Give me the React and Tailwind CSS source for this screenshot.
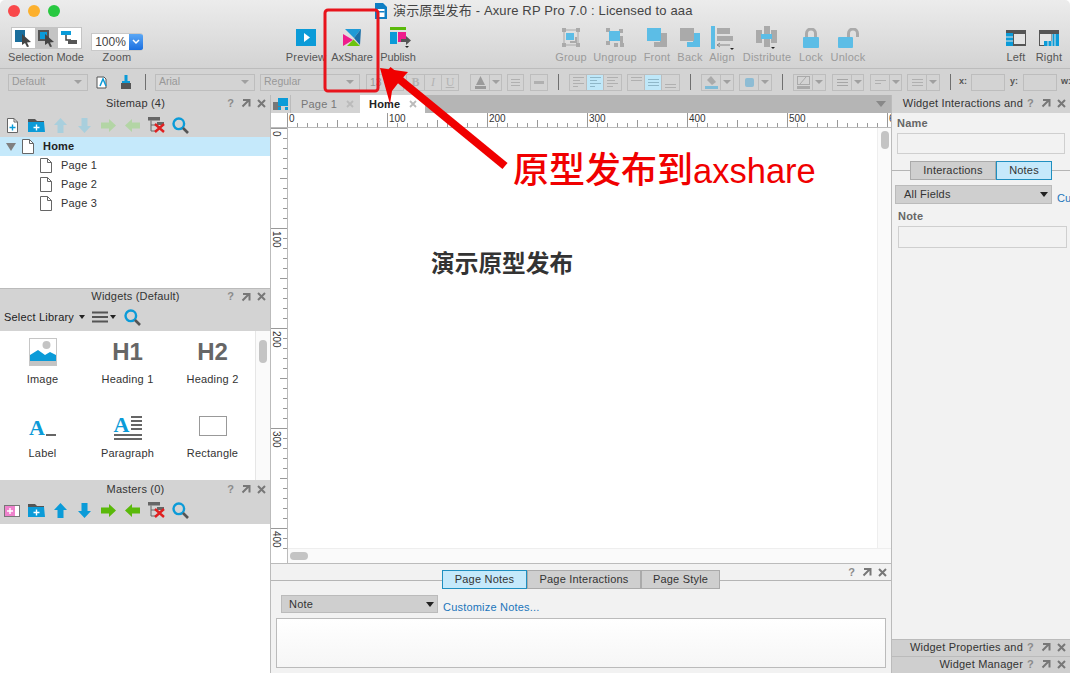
import { useMemo } from 'react';

const BLUE = '#0b9bd8';
const SKY = '#5cbde6';
const GREEN = '#5ab90a';

const Svg = ({ w, h, children, className = '' }) => (
  <svg width={w} height={h} viewBox={`0 0 ${w} ${h}`} className={className}>
    {children}
  </svg>
);

// ---- small panel icons
const NewPage = () => (
  <Svg w={13} h={15}>
    <path d="M1.5.5h6.5l3.5 3.5v10.5h-10z" fill="#fff" stroke="#666" />
    <path d="M8 .5v3.5h3.5" fill="none" stroke="#666" />
    <path d="M6.5 6.5v6M3.5 9.5h6" stroke={BLUE} strokeWidth="1.4" />
  </Svg>
);
const NewFolder = () => (
  <Svg w={17} h={13}>
    <path d="M0 0h7l2 2h7v2H0z" fill="#555" />
    <path d="M0 3h16l1 10H0z" fill={BLUE} />
    <path d="M8.5 5.5v6M5.5 8.5h6" stroke="#fff" strokeWidth="1.4" />
  </Svg>
);
const NewMaster = () => (
  <Svg w={16} h={13}>
    <rect x=".5" y="1.5" width="15" height="11" fill="#fff" stroke="#777" />
    <rect x="1" y="2" width="10" height="10" fill="#ee82cc" />
    <path d="M6 4v6M3 7h6" stroke="#fff" strokeWidth="1.4" />
  </Svg>
);
const Arrow = ({ dir, color }) => {
  const paths = {
    up: 'M6.5 0L13 7H9.5v8h-6V7H0z',
    down: 'M3.5 0h6v8H13l-6.5 7L0 8h3.5z',
    right: 'M0 3.5h8V0l7 6.5L8 13V9.5H0z',
    left: 'M15 3.5H7V0L0 6.5 7 13V9.5h8z',
  };
  const v = dir === 'up' || dir === 'down';
  return (
    <svg width={v ? 13 : 15} height={v ? 15 : 13} viewBox={v ? '0 0 13 15' : '0 0 15 13'}>
      <path d={paths[dir]} fill={color} />
    </svg>
  );
};
const DeleteTree = () => (
  <Svg w={17} h={16}>
    <rect x="0" y="0" width="12" height="3.5" fill="#666" />
    <path d="M3 3.5V14h5M3 8h5" fill="none" stroke="#666" />
    <rect x="9" y="5" width="7" height="3" fill="#666" />
    <path d="M7 7l9 8M16 7l-9 8" stroke="#e02020" strokeWidth="2.4" />
  </Svg>
);
const Search = () => (
  <Svg w={17} h={17}>
    <circle cx="6.8" cy="6.8" r="5.3" fill="none" stroke={BLUE} strokeWidth="2.4" />
    <path d="M11 11l5 5" stroke="#555" strokeWidth="2.6" />
  </Svg>
);
const Page = () => (
  <Svg w={12} h={15}>
    <path d="M.5.5h7l4 4v10H.5z" fill="#fff" stroke="#666" />
    <path d="M7.5.5v4h4" fill="none" stroke="#666" />
  </Svg>
);

// ---- main toolbar icons
const PreviewIcon = () => (
  <Svg w={20} h={17}>
    <rect width="20" height="17" fill={BLUE} />
    <path d="M8 4l6 4.5-6 4.5z" fill="#fff" />
  </Svg>
);
const AxShareIcon = () => (
  <Svg w={18} h={18}>
    <path d="M2 0h16l-7 9z" fill="#1f9ad6" />
    <path d="M18 0l-7 9 6 7z" fill="#1a6fa8" />
    <path d="M0 5l10 6-10 6z" fill="#ef1c8c" />
    <path d="M10.5 10.5l6.500 6.500H4z" fill="#6cc40e" />
  </Svg>
);
const PublishIcon = () => (
  <Svg w={22} h={21}>
    <rect x="0" y="0" width="16" height="3" fill="#5ab90a" />
    <rect x="0" y="5" width="7" height="12" fill={BLUE} />
    <rect x="8" y="5" width="8" height="10" fill="#ef1c8c" />
    <path d="M11 12h5V9l5 4.500-5 4.500v-3h-5z" fill="#555" />
    <path d="M15 19h4l-2 2z" fill="#222" />
  </Svg>
);
const GroupIcon = () => (
  <Svg w={18} h={19}>
    <rect x="2" y="2" width="14" height="15" fill="none" stroke="#aaa" />
    <path d="M0 0h4v4H0zM14 0h4v4h-4zM0 15h4v4H0zM14 15h4v4h-4z" fill="#aaa" />
    <rect x="4" y="5" width="8" height="7" fill={SKY} />
    <path d="M13 9h2v6H8v-2h5z" fill="#aaa" />
  </Svg>
);
const UngroupIcon = () => (
  <Svg w={18} h={19}>
    <path d="M0 0h4v4H0zM13 1h4v4h-4zM0 13h4v4H0zM14 15h4v4h-4zM8 15h4v4H8z" fill="#aaa" />
    <rect x="3" y="3" width="11" height="10" fill={SKY} />
    <path d="M14 8h3v7h-3z" fill="#aaa" />
  </Svg>
);
const FrontIcon = () => (
  <Svg w={20} h={19}>
    <path d="M13 5h7v14H7v-5h6z" fill="#aaa" />
    <rect width="14" height="13" fill={SKY} />
  </Svg>
);
const BackIcon = () => (
  <Svg w={20} h={19}>
    <path d="M13 5h7v14H7v-5h6z" fill={SKY} />
    <rect width="14" height="13" fill="#aaa" />
  </Svg>
);
const AlignIcon = () => (
  <Svg w={23} h={24}>
    <rect width="4" height="23" fill={SKY} />
    <rect x="6" y="2" width="13" height="6" fill="#aaa" />
    <rect x="6" y="10" width="16" height="5" fill="#aaa" />
    <path d="M6 19h13M6 19l3-2M6 19l3 2" stroke="#888" fill="none" />
    <path d="M19 22h4l-2 2z" fill="#222" />
  </Svg>
);
const DistributeIcon = () => (
  <Svg w={22} h={24}>
    <rect x="0" y="4" width="6" height="13" fill="#aaa" />
    <rect x="8" y="0" width="6" height="21" fill="#aaa" />
    <rect x="15" y="4" width="6" height="13" fill="#aaa" />
    <rect x="5" y="8" width="11" height="5" fill={SKY} />
    <path d="M15 21h4l-2 2z" fill="#222" />
  </Svg>
);
const LockIcon = () => (
  <Svg w={16} h={20}>
    <path d="M3.500 9V5.500a4.500 4.500 0 0 1 9 0V9" fill="none" stroke="#aaa" strokeWidth="3" />
    <rect y="9" width="16" height="11" rx="1" fill={SKY} />
  </Svg>
);
const UnlockIcon = () => (
  <Svg w={21} h={20}>
    <path d="M10.500 9V5.500a4.500 4.500 0 0 1 9 0V9" fill="none" stroke="#aaa" strokeWidth="3" />
    <rect y="9" width="15" height="11" rx="1" fill={SKY} />
  </Svg>
);
const LeftIcon = () => (
  <Svg w={20} h={16}>
    <rect width="20" height="16" fill="#555" />
    <rect y="3" width="7" height="13" fill={BLUE} />
    <rect x="8" y="4" width="11" height="10" fill="#e4e4e4" />
    <path d="M0 7h7M0 11h7" stroke="#e4e4e4" />
  </Svg>
);
const RightIcon = () => (
  <Svg w={20} h={16}>
    <rect width="20" height="16" fill="#555" />
    <rect x="13" y="4" width="7" height="12" fill={BLUE} />
    <rect x="1" y="4" width="11" height="11" fill="#e4e4e4" />
    <rect x="5" y="11" width="15" height="5" fill={BLUE} />
    <path d="M13 4v12M9 11v5M16 4v12" stroke="#e4e4e4" />
  </Svg>
);

const Tool = ({ label, w, muted, tight, children }) => (
  <div className={`flex flex-col items-center shrink-0 ${w}`}>
    <div className="h-[27px] flex items-center justify-center">{children}</div>
    <span className={`text-[11px] leading-[13px] whitespace-nowrap ${tight ? 'tracking-[-0.1px]' : 'tracking-[0.2px]'} ${muted ? 'text-[#9b9b9b]' : 'text-[#555]'}`}>
      {label}
    </span>
  </div>
);

// ---- format bar bits
const FmtSelect = ({ label, w, ml }) => (
  <div className={`h-[17px] border border-[#bdbdbd] flex items-center justify-between pl-[3px] pr-[5px] shrink-0 ${w} ${ml}`}>
    <span className="text-[10.5px] text-[#989898]">{label}</span>
    <span className="w-0 h-0 border-x-[4px] border-x-transparent border-t-[4px] border-t-[#a0a0a0]" />
  </div>
);
const Sep = ({ ml }) => <div className={`w-px h-[16px] bg-[#6f6f6f] shrink-0 ${ml}`} />;
const FmtSplit = ({ ml, w = 'w-[33px]', children }) => (
  <div className={`flex h-[17px] border border-[#bdbdbd] shrink-0 ${w} ${ml}`}>
    <div className="w-[19px] border-r border-[#bdbdbd] flex items-center justify-center">{children}</div>
    <div className="flex-1 flex items-center justify-center">
      <span className="w-0 h-0 border-x-[4px] border-x-transparent border-t-[4px] border-t-[#a0a0a0]" />
    </div>
  </div>
);
const Lines = ({ rows, w = 11, color = '#b0b0b0' }) => (
  <div className="flex flex-col gap-[2px]">
    {rows.map((r, i) => (
      <div key={i} className="h-px" style={{ width: r * w, backgroundColor: color }} />
    ))}
  </div>
);
const FmtCell = ({ on, children }) => (
  <div className={`h-[15px] w-[17px] border-r last:border-r-0 border-[#bdbdbd] flex items-center justify-center ${on ? 'bg-[#bfe7f8]' : ''}`}>
    {children}
  </div>
);

// ---- panels
const PanelIcons = ({ className = '' }) => (
  <div className={`flex items-center text-[#8b8b8b] shrink-0 ${className}`}>
    <span className="w-[15px] text-center text-[11px] font-bold">?</span>
    <svg width="10" height="10" viewBox="0 0 10 10" className="ml-[3px]">
      <path d="M2 2h6.500v6.500M8 2L1.500 8.500" fill="none" stroke="#777" strokeWidth="2" />
    </svg>
    <svg width="9" height="9" viewBox="0 0 9 9" className="ml-[6px]">
      <path d="M1 1l7 7M8 1L1 8" stroke="#777" strokeWidth="2" />
    </svg>
  </div>
);
const PanelHead = ({ title, h = 'h-[18px]' }) => (
  <div className={`flex items-center pr-[4px] ${h}`}>
    <div className="flex-1 text-center pl-[48px] text-[11px] text-[#333] tracking-[0.2px]">{title}</div>
    <PanelIcons />
  </div>
);
const SideHead = ({ title }) => (
  <div className="h-[17px] pb-[2px] bg-[#cfcfcf] border-t border-[#bbb] flex items-center justify-end pr-[4px] text-[11px] text-[#333] tracking-[0.2px]">
    <span className="whitespace-nowrap">{title}</span>
    <PanelIcons />
  </div>
);
const ToolCell = ({ children }) => <div className="w-[24px] flex justify-center items-center shrink-0">{children}</div>;
const PanelTools = ({ faded, first, className = '' }) => (
  <div className={`flex items-center h-[24px] ${className}`}>
    <ToolCell>{first}</ToolCell>
    <ToolCell><NewFolder /></ToolCell>
    <ToolCell><Arrow dir="up" color={faded ? '#a9cfdd' : BLUE} /></ToolCell>
    <ToolCell><Arrow dir="down" color={faded ? '#a9cfdd' : BLUE} /></ToolCell>
    <ToolCell><Arrow dir="right" color={faded ? '#b3d5a5' : GREEN} /></ToolCell>
    <ToolCell><Arrow dir="left" color={faded ? '#b3d5a5' : GREEN} /></ToolCell>
    <ToolCell><DeleteTree /></ToolCell>
    <ToolCell><Search /></ToolCell>
  </div>
);
const Caret = ({ className = '' }) => (
  <span className={`inline-block w-0 h-0 border-x-[3px] border-x-transparent border-t-[4px] border-t-[#222] ${className}`} />
);

const Widget = ({ label, children }) => (
  <div className="h-[74px] flex flex-col items-center">
    <div className="h-[38px] pt-[2px] w-full flex items-center justify-center">{children}</div>
    <span className="mt-[3px] text-[11px] leading-[13px] text-[#333] tracking-[0.2px]">{label}</span>
  </div>
);

const Tab = ({ label, on, w }) => (
  <div className={`h-[19px] border flex items-center justify-center text-[11px] tracking-[0.2px] text-[#333] shrink-0 ${w} ${on ? 'bg-[#c5e9fb] border-[#1f8fc0]' : 'bg-[#cfcfcf] border-[#aaa]'}`}>
    {label}
  </div>
);

// ---- rulers
const HRuler = () => {
  const ticks = useMemo(() => Array.from({ length: 61 }, (_, i) => i * 10), []);
  return (
    <svg width="604" height="14" className="block">
      {ticks.map((t) => {
        const len = t % 100 === 0 ? 14 : t % 50 === 0 ? 7 : 4;
        return <line key={t} x1={t + 0.5} x2={t + 0.5} y1={14 - len} y2={14} stroke="#999" />;
      })}
      {['0', '100', '200', '300', '400', '500', '6'].map((t, i) => (
        <text key={t} x={i * 100 + 2} y={9} fontSize="10" fill="#333" fontFamily="Liberation Sans">{t}</text>
      ))}
    </svg>
  );
};
const VRuler = () => {
  const ticks = useMemo(() => Array.from({ length: 43 }, (_, i) => i * 10), []);
  return (
    <svg width="16" height="436" className="block">
      {ticks.map((t) => {
        const len = t % 100 === 0 ? 16 : t % 50 === 0 ? 7 : 4;
        return <line key={t} y1={t + 0.5} y2={t + 0.5} x1={16 - len} x2={16} stroke="#999" />;
      })}
      {[0, 100, 200, 300, 400].map((t) => (
        <text key={t} transform={`translate(2 ${t + 3}) rotate(90)`} fontSize="10" fill="#333" fontFamily="Liberation Sans">{t}</text>
      ))}
    </svg>
  );
};

export default function App() {
  return (
    <div className="relative w-[1070px] h-[673px] overflow-hidden rounded-t-[5px] flex flex-col bg-white font-['Liberation_Sans','Noto_Sans_CJK_SC',sans-serif]">
      {/* title bar and main toolbar */}
      <div className="h-[68px] shrink-0 bg-gradient-to-b from-[#ececec] to-[#d3d3d3] flex flex-col">
        <div className="h-[22px] flex items-center">
          <div className="w-[375px] flex items-center gap-[8px] pl-[8px]">
            <span className="w-[12px] h-[12px] rounded-full bg-[#f9484a]" />
            <span className="w-[12px] h-[12px] rounded-full bg-[#fcb02d]" />
            <span className="w-[12px] h-[12px] rounded-full bg-[#28c840]" />
          </div>
          <svg width="12" height="16" viewBox="0 0 12 16">
            <path d="M0 0h8l4 4v12H0z" fill="#0f7fc4" />
            <rect x="2.500" y="6" width="7" height="8" fill="#fff" />
            <rect x="2.500" y="8" width="7" height="1.500" fill="#0f7fc4" />
          </svg>
          <span className="ml-[6px] text-[13px] text-[#444] whitespace-nowrap tracking-[0.15px]">演示原型发布 - Axure RP Pro 7.0 : Licensed to aaa</span>
        </div>
        <div className="flex pt-[2px]">
          <div className="ml-[8px] w-[76px] flex flex-col items-center shrink-0">
            <div className="h-[27px] flex items-center">
              <div className="flex border border-[#c4c4c4] bg-white h-[22px]">
                <div className="w-[23px] flex items-center justify-center">
                  <svg width="18" height="18" viewBox="0 0 18 18">
                    <rect x="1" y="1" width="10" height="12" fill="#1b6e9c" />
                    <path d="M8 5l9 8-4 .5 2 4-2 .5-2-4-3 2z" fill="#444" />
                  </svg>
                </div>
                <div className="w-[23px] bg-[#c4c4c4] flex items-center justify-center">
                  <svg width="18" height="18" viewBox="0 0 18 18">
                    <rect x="1" y="1" width="11" height="11" fill="#555" />
                    <rect x="3" y="3" width="7" height="7" fill={BLUE} />
                    <path d="M8 5l9 8-4 .5 2 4-2 .5-2-4-3 2z" fill="#444" />
                  </svg>
                </div>
                <div className="w-[23px] flex items-center justify-center">
                  <svg width="18" height="16" viewBox="0 0 18 16">
                    <rect x="1" y="1" width="10" height="4" fill={BLUE} />
                    <path d="M6 5v5h5" fill="none" stroke="#444" strokeWidth="1.500" />
                    <rect x="8" y="10" width="9" height="4" fill="#555" />
                  </svg>
                </div>
              </div>
            </div>
            <span className="text-[11px] leading-[13px] text-[#555] whitespace-nowrap">Selection Mode</span>
          </div>
          <div className="ml-[7px] w-[52px] flex flex-col items-center shrink-0">
            <div className="h-[27px] flex items-end">
              <div className="w-[52px] h-[18px] flex rounded-r-[3px] overflow-hidden border-l border-y border-[#c9c9c9]">
                <div className="flex-1 bg-white text-[12px] leading-[16px] text-[#444] text-center">100%</div>
                <div className="w-[14px] bg-gradient-to-b from-[#5aa7f5] to-[#1a6fe0] flex items-center justify-center">
                  <svg width="8" height="6" viewBox="0 0 8 6"><path d="M1 1l3 3 3-3" fill="none" stroke="#fff" strokeWidth="1.500" /></svg>
                </div>
              </div>
            </div>
            <span className="text-[11px] leading-[13px] text-[#555] tracking-[0.2px]">Zoom</span>
          </div>
          <div className="ml-[140px] flex">
            <Tool label="Preview" w="w-[46px]"><PreviewIcon /></Tool>
            <Tool tight label="AxShare" w="w-[46px]"><AxShareIcon /></Tool>
            <Tool tight label="Publish" w="w-[46px]"><div className="pl-[6px]"><PublishIcon /></div></Tool>
          </div>
          <div className="ml-[128px] flex">
            <Tool muted label="Group" w="w-[44px]"><GroupIcon /></Tool>
            <Tool muted label="Ungroup" w="w-[44px]"><UngroupIcon /></Tool>
            <Tool muted label="Front" w="w-[40px]"><FrontIcon /></Tool>
            <Tool muted label="Back" w="w-[26px]"><BackIcon /></Tool>
            <Tool muted label="Align" w="w-[38px]"><AlignIcon /></Tool>
            <Tool muted label="Distribute" w="w-[52px]"><DistributeIcon /></Tool>
            <Tool muted label="Lock" w="w-[36px]"><LockIcon /></Tool>
            <Tool muted label="Unlock" w="w-[38px]"><UnlockIcon /></Tool>
          </div>
          <div className="ml-[133px] flex">
            <Tool label="Left" w="w-[32px]"><LeftIcon /></Tool>
            <Tool label="Right" w="w-[34px]"><RightIcon /></Tool>
          </div>
        </div>
      </div>

      {/* format bar */}
      <div className="h-[27px] shrink-0 bg-[#d3d3d3] border-t border-[#bcbcbc] flex items-center text-[#989898]">
        <FmtSelect label="Default" w="w-[80px]" ml="ml-[8px]" />
        <div className="ml-[8px] shrink-0">
          <svg width="13" height="13" viewBox="0 0 13 13">
            <path d="M1 1h7l2 2v9H1z" fill="#fff" stroke="#555" />
            <path d="M4 10l3-7 3 7" fill="none" stroke={BLUE} strokeWidth="1.500" />
          </svg>
        </div>
        <div className="ml-[11px] shrink-0">
          <svg width="12" height="14" viewBox="0 0 12 14">
            <rect x="4.500" y="0" width="3" height="6" fill={BLUE} />
            <path d="M2 6h8v2H2z" fill={BLUE} />
            <rect x="1" y="8" width="10" height="6" fill="#555" />
          </svg>
        </div>
        <Sep ml="ml-[13px]" />
        <FmtSelect label="Arial" w="w-[100px]" ml="ml-[9px]" />
        <FmtSelect label="Regular" w="w-[100px]" ml="ml-[5px]" />
        <div className="ml-[6px] w-[38px] h-[17px] border border-[#bdbdbd] pl-[3px] text-[10.5px] leading-[15px] text-[#989898] shrink-0">13</div>
        <div className="flex h-[17px] border border-[#bdbdbd] shrink-0 ml-[2px] text-[12px] leading-[15px] text-[#b4b4b4] font-['Liberation_Serif',serif]">
          <div className="w-[17px] text-center font-bold">B</div>
          <div className="w-[18px] text-center italic border-x border-[#bdbdbd]">I</div>
          <div className="w-[16px] text-center underline">U</div>
        </div>
        <FmtSplit ml="ml-[11px]" w="w-[32px]">
          <svg width="11" height="13" viewBox="0 0 11 13"><path d="M5.500 0L10 9H1z" fill="#9a9a9a" /><rect y="10" width="11" height="3" fill="#9a9a9a" /></svg>
        </FmtSplit>
        <div className="ml-[5px] w-[17px] h-[17px] border border-[#bdbdbd] flex items-center justify-center shrink-0"><Lines rows={[1, 1, 1]} w={9} /></div>
        <div className="ml-[6px] w-[18px] h-[17px] border border-[#bdbdbd] flex items-center justify-center shrink-0"><div className="w-[10px] h-[3px] bg-[#b0b0b0]" /></div>
        <Sep ml="ml-[10px]" />
        <div className="ml-[10px] flex border border-[#bdbdbd] shrink-0">
          <FmtCell><Lines rows={[1, 0.7, 1, 0.5]} /></FmtCell>
          <FmtCell on><Lines rows={[1, 0.7, 1, 0.5]} color="#8fb7c8" /></FmtCell>
          <FmtCell><Lines rows={[1, 0.7, 1, 0.5]} /></FmtCell>
        </div>
        <div className="ml-[5px] flex border border-[#bdbdbd] shrink-0">
          <FmtCell><div className="self-start pt-[2px]"><Lines rows={[1, 1]} /></div></FmtCell>
          <FmtCell on><Lines rows={[1, 1, 1]} color="#8fb7c8" /></FmtCell>
          <FmtCell><div className="self-end pb-[2px]"><Lines rows={[1, 1]} /></div></FmtCell>
        </div>
        <Sep ml="ml-[10px]" />
        <FmtSplit ml="ml-[10px]">
          <svg width="13" height="13" viewBox="0 0 13 13"><path d="M6 0l5 6-4 3-5-5z" fill="#aaa" /><rect y="10" width="13" height="3" fill="#7fbcd8" /></svg>
        </FmtSplit>
        <FmtSplit ml="ml-[5px]"><div className="w-[9px] h-[9px] bg-[#8dbcd4] rounded-[2px]" /></FmtSplit>
        <Sep ml="ml-[10px]" />
        <FmtSplit ml="ml-[10px]">
          <svg width="13" height="13" viewBox="0 0 13 13"><rect x=".5" y=".5" width="12" height="8" fill="none" stroke="#aaa" /><path d="M3 8l6-7" stroke="#aaa" /><rect y="10" width="13" height="3" fill="#aaa" /></svg>
        </FmtSplit>
        <FmtSplit ml="ml-[6px]" w="w-[32px]"><Lines rows={[1, 1, 1]} color="#a6a6a6" /></FmtSplit>
        <FmtSplit ml="ml-[6px]" w="w-[32px]"><Lines rows={[1, 0.6]} /></FmtSplit>
        <FmtSplit ml="ml-[5px]"><Lines rows={[1, 1, 1]} /></FmtSplit>
        <Sep ml="ml-[10px]" />
        <span className="ml-[8px] text-[9px] font-bold text-[#555] shrink-0">x:</span>
        <div className="ml-[4px] w-[34px] h-[17px] border border-[#bdbdbd] shrink-0" />
        <span className="ml-[5px] text-[9px] font-bold text-[#555] shrink-0">y:</span>
        <div className="ml-[5px] w-[34px] h-[17px] border border-[#bdbdbd] shrink-0" />
        <span className="ml-[4px] text-[9px] font-bold text-[#555] shrink-0">w:</span>
      </div>

      {/* body */}
      <div className="flex-1 flex min-h-0">
        {/* left panels */}
        <div className="w-[271px] shrink-0 flex flex-col border-r border-[#bbb]">
          <div className="h-[193px] flex flex-col shrink-0">
            <div className="bg-[#d3d3d3] h-[42px] shrink-0">
              <PanelHead title="Sitemap (4)" h="h-[16px]" />
              <PanelTools faded first={<NewPage />} className="mt-[2px]" />
            </div>
            <div className="h-[19px] bg-[#c5e9fb] flex items-center pl-[6px]">
              <span className="w-0 h-0 border-x-[5px] border-x-transparent border-t-[8px] border-t-[#808080]" />
              <div className="ml-[6px]"><Page /></div>
              <span className="ml-[9px] text-[11px] font-bold text-[#222] tracking-[0.2px]">Home</span>
            </div>
            {['Page 1', 'Page 2', 'Page 3'].map((p) => (
              <div key={p} className="h-[19px] flex items-center pl-[40px]">
                <Page />
                <span className="ml-[9px] text-[11px] text-[#333] tracking-[0.2px]">{p}</span>
              </div>
            ))}
          </div>
          <div className="h-[43px] shrink-0 bg-[#d3d3d3] border-t border-[#bbb]">
            <PanelHead title="Widgets (Default)" h="h-[15px]" />
            <div className="flex items-center pl-[4px] h-[26px] text-[11px] text-[#222] tracking-[0.2px]">
              Select Library
              <Caret className="ml-[5px]" />
              <svg width="16" height="12" viewBox="0 0 16 12" className="ml-[7px]">
                <path d="M0 1.500h16M0 6h16M0 10.500h16" stroke="#555" strokeWidth="1.800" />
              </svg>
              <Caret className="ml-[2px]" />
              <div className="ml-[8px]"><Search /></div>
            </div>
          </div>
          <div className="h-[149px] shrink-0 flex">
            <div className="w-[255px] grid grid-cols-3 content-start pt-[1px]">
              <Widget label="Image">
                <svg width="28" height="28" viewBox="0 0 28 28">
                  <rect x=".5" y=".5" width="27" height="27" fill="#fff" stroke="#c6c6c6" />
                  <circle cx="17.500" cy="7" r="4" fill="#c4c4c4" />
                  <path d="M1 17l8-5 7 5 5-3 6 3v6H1z" fill={BLUE} />
                  <rect x="1" y="23" width="26" height="4" fill="#c4c4c4" />
                </svg>
              </Widget>
              <Widget label="Heading 1"><span className="text-[24px] font-bold text-[#666]">H1</span></Widget>
              <Widget label="Heading 2"><span className="text-[24px] font-bold text-[#666]">H2</span></Widget>
              <Widget label="Label">
                <div className="flex items-end pt-[4px]">
                  <span className="text-[22px] leading-[22px] font-bold text-[#0b9bd8] font-['Liberation_Serif',serif]">A</span>
                  <div className="w-[10px] h-[2px] bg-[#666] mb-[3px] ml-[1px]" />
                </div>
              </Widget>
              <Widget label="Paragraph">
                <div className="w-[28px] flex flex-col gap-[2px] pt-[3px]">
                  <div className="flex justify-between items-start h-[16px]">
                    <span className="text-[22px] leading-[18px] font-bold text-[#0b9bd8] font-['Liberation_Serif',serif]">A</span>
                    <div className="flex flex-col gap-[2px]">
                      <div className="w-[11px] h-[2px] bg-[#666]" />
                      <div className="w-[11px] h-[2px] bg-[#666]" />
                      <div className="w-[11px] h-[2px] bg-[#666]" />
                      <div className="w-[11px] h-[2px] bg-[#666]" />
                    </div>
                  </div>
                  <div className="h-[2px] bg-[#666]" />
                  <div className="h-[2px] bg-[#666]" />
                </div>
              </Widget>
              <Widget label="Rectangle"><div className="w-[28px] h-[20px] border border-[#999] bg-white" /></Widget>
            </div>
            <div className="flex-1 border-l border-[#e6e6e6] bg-[#fafafa] pt-[9px] pl-[3px]">
              <div className="w-[8px] h-[23px] rounded-full bg-[#c4c4c4]" />
            </div>
          </div>
          <div className="h-[44px] shrink-0 bg-[#d3d3d3]">
            <PanelHead title="Masters (0)" />
            <PanelTools first={<NewMaster />} />
          </div>
          <div className="flex-1" />
        </div>

        {/* center */}
        <div className="w-[620px] shrink-0 flex flex-col">
          <div className="h-[18px] bg-[#b5b5b5] flex shrink-0">
            <div className="w-[20px] bg-[#d3d3d3] border-r border-[#bbb] flex items-center justify-center">
              <svg width="16" height="12" viewBox="0 0 16 12">
                <rect x="0" y="4" width="8" height="8" fill="#777" />
                <rect x="5" y="0" width="10" height="8" fill={BLUE} />
                <rect x="5" y="9" width="3" height="3" fill={BLUE} />
                <rect x="12" y="9" width="3" height="3" fill={BLUE} />
              </svg>
            </div>
            <div className="w-[69px] bg-[#d3d3d3] flex items-center pl-[10px] text-[11px] text-[#777] tracking-[0.2px]">
              Page 1
              <svg width="8" height="8" viewBox="0 0 8 8" className="ml-[9px]"><path d="M1 1l6 6M7 1L1 7" stroke="#bbb" strokeWidth="1.800" /></svg>
            </div>
            <div className="w-[65px] bg-white flex items-center pl-[9px] text-[11px] font-bold text-[#222] tracking-[0.2px]">
              Home
              <svg width="8" height="8" viewBox="0 0 8 8" className="ml-[9px]"><path d="M1 1l6 6M7 1L1 7" stroke="#bbb" strokeWidth="1.800" /></svg>
            </div>
            <div className="flex-1 flex items-center justify-end pr-[5px]">
              <span className="w-0 h-0 border-x-[5px] border-x-transparent border-t-[6px] border-t-[#888]" />
            </div>
          </div>
          <div className="h-[14px] flex shrink-0 bg-white border-b border-[#bbb] box-content">
            <div className="w-[16px] shrink-0" />
            <HRuler />
          </div>
          <div className="flex-1 flex min-h-0">
            <div className="w-[16px] shrink-0 border-r border-[#bbb] box-content overflow-hidden"><VRuler /></div>
            <div className="flex-1 flex flex-col min-w-0">
              <div className="flex-1 flex min-h-0">
                <div className="flex-1 pl-[143px] pt-[118px] text-[23.7px] font-bold text-[#333] leading-[36px]">演示原型发布</div>
                <div className="w-[14px] shrink-0 bg-[#fafafa] border-l border-[#eee] pt-[3px] pl-[3px]">
                  <div className="w-[8px] h-[18px] rounded-full bg-[#c4c4c4]" />
                </div>
              </div>
              <div className="h-[15px] shrink-0 bg-[#fafafa] border-t border-[#eee] pl-[2px] pt-[3px]">
                <div className="w-[18px] h-[8px] rounded-full bg-[#c4c4c4]" />
              </div>
            </div>
          </div>
          {/* page notes */}
          <div className="h-[110px] shrink-0 bg-[#f2f2f2] border-t border-[#bbb]">
            <div className="relative h-[25px]">
              <div className="absolute left-0 right-0 top-[16px] h-px bg-[#b5b5b5]" />
              <div className="relative flex pl-[171px] pt-[6px]">
                <Tab on label="Page Notes" w="w-[85px]" />
                <Tab label="Page Interactions" w="w-[114px]" />
                <Tab label="Page Style" w="w-[79px]" />
              </div>
              <PanelIcons className="absolute right-[4px] top-0" />
            </div>
            <div className="flex pl-[10px] items-start h-[29px]">
              <div className="w-[157px] h-[18px] mt-[6px] bg-[#cfcfcf] border border-[#bbb] flex items-center justify-between pl-[7px] pr-[3px] text-[11px] text-[#333] tracking-[0.2px]">
                Note
                <span className="w-0 h-0 border-x-[4px] border-x-transparent border-t-[5px] border-t-[#222]" />
              </div>
              <span className="ml-[5px] mt-[12px] text-[11px] leading-[13px] text-[#1b75bb] tracking-[0.2px]">Customize Notes...</span>
            </div>
            <div className="ml-[5px] w-[610px] h-[50px] border border-[#bbb] bg-gradient-to-b from-white to-[#f6f6f6]" />
          </div>
        </div>

        {/* right panel */}
        <div className="flex-1 flex flex-col bg-[#f2f2f2] border-l border-[#bbb] min-w-0">
          <div className="h-[18px] pb-[2px] bg-[#d3d3d3] flex items-center justify-end pr-[4px] shrink-0 text-[11px] text-[#333] tracking-[0.2px] overflow-hidden">
            <span className="whitespace-nowrap">Widget Interactions and</span>
            <PanelIcons />
          </div>
          <div className="pl-[5px] pt-[4px] text-[11px] font-bold text-[#666] leading-[13px] tracking-[0.2px]">Name</div>
          <div className="ml-[5px] mt-[3px] w-[168px] h-[21px] border border-[#cfcfcf] shrink-0" />
          <div className="relative mt-[7px] h-[19px] shrink-0">
            <div className="absolute left-0 right-0 top-[9px] h-px bg-[#b5b5b5]" />
            <div className="relative flex pl-[18px]">
              <Tab label="Interactions" w="w-[86px]" />
              <Tab on label="Notes" w="w-[56px]" />
            </div>
          </div>
          <div className="flex items-start mt-[5px] pl-[3px] shrink-0 overflow-hidden">
            <div className="w-[157px] shrink-0 h-[19px] bg-[#cfcfcf] border border-[#bbb] flex items-center justify-between pl-[8px] pr-[3px] text-[11px] text-[#333] tracking-[0.2px]">
              All Fields
              <span className="w-0 h-0 border-x-[4px] border-x-transparent border-t-[5px] border-t-[#222]" />
            </div>
            <span className="ml-[5px] mt-[7px] text-[11px] leading-[13px] text-[#1b75bb]">Cu</span>
          </div>
          <div className="pl-[6px] mt-[5px] text-[11px] font-bold text-[#666] leading-[13px] tracking-[0.2px]">Note</div>
          <div className="ml-[6px] mt-[3px] w-[169px] h-[22px] border border-[#cfcfcf] shrink-0" />
          <div className="flex-1" />
          <SideHead title="Widget Properties and" />
          <SideHead title="Widget Manager" />
        </div>
      </div>

      {/* annotation over the app */}
      <svg width="1070" height="673" className="absolute left-0 top-0 pointer-events-none">
        <rect x="325" y="10" width="53" height="81" rx="3" fill="none" stroke="#e8141c" strokeWidth="3" />
        <path d="M388 70L505 166" stroke="#f00000" strokeWidth="8" fill="none" />
        <path d="M380 68L408 72L399 82L392 91L390 104Z" fill="#f00000" />
      </svg>
      <div className="absolute left-[513px] top-[150px] text-[36px] leading-[42px] font-medium text-[#f00000] whitespace-nowrap pointer-events-none">
        原型发布到<span className="text-[34.5px]">axshare</span>
      </div>
    </div>
  );
}
